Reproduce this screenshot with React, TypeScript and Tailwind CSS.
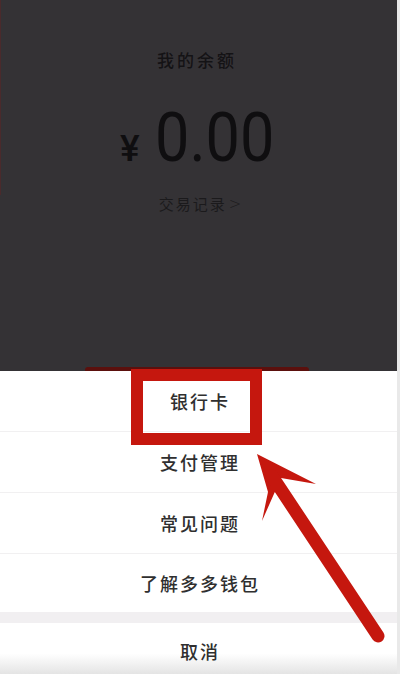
import React from "react";

const menuItems = ["银行卡", "支付管理", "常见问题", "了解多多钱包"];

export default function App() {
  return (
    <div className="relative w-[400px] h-[674px] overflow-hidden bg-[#343235] flex flex-col font-['Noto_Sans_CJK_SC',sans-serif]">
      {/* faint edges from the recording */}
      <div className="absolute left-0 top-0 w-px h-[195px] bg-[#4a2a2c]" />
      <div className="absolute right-0 top-0 w-[3px] h-full bg-[#e9e9e9]" />

      {/* Balance area (dimmed) */}
      <div className="flex-1 flex flex-col items-center pr-[6px] pt-[48px]">
        <div className="text-[17px] leading-[24px] tracking-[3px] font-medium text-[#141315]">我的余额</div>
        <div className="flex items-baseline mt-[32px] h-[68px] leading-none text-[#0f0e10] font-['Roboto',sans-serif]">
          <span className="text-[37px] font-medium mr-[15px]">¥</span>
          <span className="text-[68px] scale-x-[0.9] origin-left mr-[-13px]">0.00</span>
        </div>
        <div className="mt-[22px] ml-[8px] text-[15px] leading-[20px] tracking-[2px] text-[#1b1a1c] flex items-center">
          交易记录
          <span className="ml-[2px] text-[15px] font-light font-['DejaVu_Sans',sans-serif]">&gt;</span>
        </div>
      </div>

      {/* Bottom sheet */}
      <div className="h-[303px] bg-white flex flex-col">
        {menuItems.map((item, i) => (
          <div
            key={item}
            className={
              i < 3
                ? "h-[61px] border-b border-[#f1f0f1] flex items-center justify-center text-[18px] tracking-[2px] font-medium text-[#2f2f2f]"
                : "h-[58px] flex items-center justify-center text-[18px] tracking-[2px] font-medium text-[#2f2f2f]"
            }
          >
            {item}
          </div>
        ))}
        <div className="h-[11px] bg-[#f1eff1]" />
        <div className="flex-1 flex items-center justify-center pt-[6px] text-[18px] tracking-[2px] font-medium text-[#2f2f2f] bg-gradient-to-b from-white from-60% to-[#e4e4e4]">
          取消
        </div>
      </div>

      {/* button behind the dim overlay */}
      <div className="absolute left-[85px] top-[367px] w-[224px] h-[4px] rounded-t-[3px] bg-[#5b100d]" />

      {/* annotation: red highlight box */}
      <div className="absolute left-[131px] top-[369px] w-[131px] h-[76px] border-[12px] border-[#c5170e]" />

      {/* annotation: red arrow */}
      <svg className="absolute left-0 top-0" width="400" height="674" viewBox="0 0 400 674">
        <polygon points="257,454 316,484 281,478 262,521 268,492" fill="#c5170e" />
        <line x1="272" y1="476" x2="378" y2="636" stroke="#c5170e" strokeWidth="13" strokeLinecap="round" />
      </svg>
    </div>
  );
}
